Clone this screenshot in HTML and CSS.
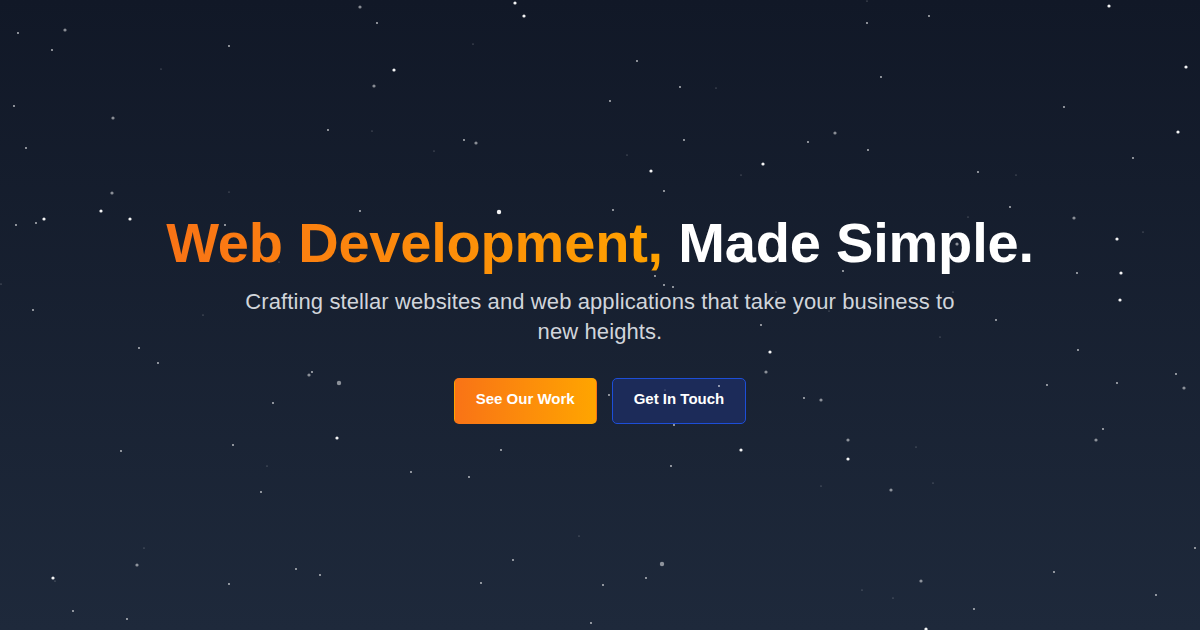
FILE: index.html
```html
<!DOCTYPE html>
<html lang="en">
<head>
<meta charset="utf-8">
<title>Web Development, Made Simple.</title>
<link rel="stylesheet" href="styles.css">
</head>
<body>
<main class="hero">
  <div class="hero-content">
    <h1 class="title"><span class="title-accent">Web Development,</span> Made Simple.</h1>
    <p class="subtitle">Crafting stellar websites and web applications that take your business to new heights.</p>
    <div class="actions">
      <a class="btn btn-primary" href="#work">See Our Work</a>
      <a class="btn btn-secondary" href="#contact">Get In Touch</a>
    </div>
  </div>
  <svg class="stars" viewBox="0 0 1200 630" width="1200" height="630" aria-hidden="true">
    <g class="s">
      <circle cx="18" cy="33" r="0.9"/><circle cx="52" cy="50" r="0.9"/><circle cx="229" cy="46" r="0.9"/>
      <circle cx="377" cy="23" r="0.9"/><circle cx="14" cy="106" r="0.9"/><circle cx="26" cy="148" r="0.9"/>
      <circle cx="328" cy="130" r="0.9"/><circle cx="464" cy="140" r="0.9"/><circle cx="36" cy="223" r="0.9"/>
      <circle cx="16" cy="225" r="0.9"/><circle cx="360" cy="211" r="0.9"/><circle cx="225" cy="225" r="0.9"/>
      <circle cx="33" cy="310" r="0.9"/><circle cx="867" cy="23" r="0.9"/><circle cx="929" cy="16" r="0.9"/>
      <circle cx="637" cy="61" r="0.9"/><circle cx="680" cy="87" r="0.9"/><circle cx="881" cy="77" r="0.9"/>
      <circle cx="610" cy="101" r="0.9"/><circle cx="1064" cy="107" r="0.9"/><circle cx="684" cy="140" r="0.9"/>
      <circle cx="808" cy="142" r="0.9"/><circle cx="868" cy="150" r="0.9"/><circle cx="1133" cy="158" r="0.9"/>
      <circle cx="978" cy="172" r="0.9"/><circle cx="664" cy="191" r="0.9"/><circle cx="613" cy="210" r="0.9"/>
      <circle cx="1010" cy="207" r="0.9"/><circle cx="843" cy="271" r="0.9"/><circle cx="1077" cy="273" r="0.9"/>
      <circle cx="655" cy="276" r="0.9"/><circle cx="664" cy="285" r="0.9"/><circle cx="673" cy="287" r="0.9"/>
      <circle cx="139" cy="348" r="0.9"/><circle cx="158" cy="363" r="0.9"/><circle cx="312" cy="372" r="0.9"/>
      <circle cx="273" cy="403" r="0.9"/><circle cx="233" cy="445" r="0.9"/><circle cx="121" cy="451" r="0.9"/>
      <circle cx="261" cy="492" r="0.9"/><circle cx="411" cy="472" r="0.9"/><circle cx="469" cy="477" r="0.9"/>
      <circle cx="501" cy="450" r="0.9"/><circle cx="513" cy="560" r="0.9"/><circle cx="481" cy="583" r="0.9"/>
      <circle cx="296" cy="569" r="0.9"/><circle cx="320" cy="575" r="0.9"/><circle cx="229" cy="584" r="0.9"/>
      <circle cx="73" cy="611" r="0.9"/><circle cx="127" cy="619" r="0.9"/><circle cx="591" cy="623" r="0.9"/>
      <circle cx="761" cy="325" r="0.9"/><circle cx="996" cy="320" r="0.9"/><circle cx="1078" cy="350" r="0.9"/>
      <circle cx="1176" cy="374" r="0.9"/><circle cx="1047" cy="385" r="0.9"/><circle cx="1117" cy="383" r="0.9"/>
      <circle cx="719" cy="386" r="0.9"/><circle cx="609" cy="395" r="0.9"/><circle cx="804" cy="398" r="0.9"/>
      <circle cx="674" cy="425" r="0.9"/><circle cx="1103" cy="429" r="0.9"/><circle cx="671" cy="466" r="0.9"/>
      <circle cx="1195" cy="548" r="0.9"/><circle cx="646" cy="578" r="0.9"/><circle cx="603" cy="585" r="0.9"/>
      <circle cx="1054" cy="572" r="0.9"/><circle cx="1156" cy="595" r="0.9"/><circle cx="974" cy="609" r="0.9"/>
    </g>
    <g class="t">
      <circle cx="161" cy="69" r="0.6"/><circle cx="473" cy="44" r="0.6"/><circle cx="372" cy="131" r="0.6"/>
      <circle cx="434" cy="151" r="0.6"/><circle cx="229" cy="192" r="0.6"/><circle cx="279" cy="262" r="0.6"/>
      <circle cx="1" cy="284" r="0.6"/><circle cx="203" cy="315" r="0.6"/><circle cx="867" cy="1" r="0.6"/>
      <circle cx="716" cy="88" r="0.6"/><circle cx="627" cy="155" r="0.6"/><circle cx="741" cy="175" r="0.6"/>
      <circle cx="1016" cy="175" r="0.6"/><circle cx="968" cy="217" r="0.6"/><circle cx="1143" cy="232" r="0.6"/>
      <circle cx="776" cy="292" r="0.6"/><circle cx="953" cy="292" r="0.6"/><circle cx="829" cy="311" r="0.6"/>
      <circle cx="267" cy="466" r="0.6"/><circle cx="579" cy="536" r="0.6"/><circle cx="144" cy="548" r="0.6"/>
      <circle cx="55" cy="581" r="0.6"/><circle cx="940" cy="337" r="0.6"/><circle cx="665" cy="390" r="0.6"/>
      <circle cx="916" cy="447" r="0.6"/><circle cx="821" cy="486" r="0.6"/><circle cx="933" cy="483" r="0.6"/>
      <circle cx="862" cy="590" r="0.6"/><circle cx="893" cy="598" r="0.6"/>
    </g>
    <g class="g">
      <circle cx="65" cy="30" r="1.6"/><circle cx="360" cy="7" r="1.6"/><circle cx="374" cy="86" r="1.6"/>
      <circle cx="113" cy="118" r="1.6"/><circle cx="476" cy="143" r="1.6"/><circle cx="112" cy="193" r="1.6"/>
      <circle cx="835" cy="133" r="1.6"/><circle cx="1074" cy="218" r="1.6"/><circle cx="957" cy="244" r="1.6"/>
      <circle cx="309" cy="375" r="1.6"/><circle cx="339" cy="383" r="2.2"/><circle cx="137" cy="565" r="1.6"/>
      <circle cx="766" cy="372" r="1.6"/><circle cx="1184" cy="388" r="1.6"/><circle cx="821" cy="400" r="1.6"/>
      <circle cx="1096" cy="440" r="1.6"/><circle cx="848" cy="440" r="1.6"/><circle cx="891" cy="490" r="1.6"/>
      <circle cx="662" cy="564" r="2.2"/><circle cx="921" cy="581" r="1.6"/>
    </g>
    <g class="w">
      <circle cx="515" cy="3" r="1.6"/><circle cx="524" cy="16" r="1.6"/><circle cx="394" cy="70" r="1.6"/>
      <circle cx="101" cy="211" r="1.6"/><circle cx="130" cy="219" r="1.6"/><circle cx="44" cy="219" r="1.6"/>
      <circle cx="499" cy="212" r="2.2"/><circle cx="1109" cy="6" r="1.6"/><circle cx="1186" cy="67" r="1.6"/>
      <circle cx="1178" cy="132" r="1.6"/><circle cx="763" cy="164" r="1.6"/><circle cx="651" cy="171" r="1.6"/>
      <circle cx="1117" cy="239" r="1.6"/><circle cx="1121" cy="273" r="1.6"/><circle cx="1120" cy="300" r="1.6"/>
      <circle cx="337" cy="438" r="1.6"/><circle cx="53" cy="578" r="1.6"/><circle cx="770" cy="352" r="1.6"/>
      <circle cx="741" cy="450" r="1.6"/><circle cx="848" cy="459" r="1.6"/><circle cx="926" cy="629" r="1.6"/>
    </g>
  </svg>
</main>
</body>
</html>
```

FILE: styles.css
```css
* {
  box-sizing: border-box;
}

html, body {
  margin: 0;
  padding: 0;
}

body {
  font-family: "Liberation Sans", Arial, Helvetica, sans-serif;
  background: #111827;
  color: #ffffff;
}

.hero {
  position: relative;
  width: 1200px;
  height: 630px;
  overflow: hidden;
  display: flex;
  align-items: center;
  justify-content: center;
  padding-top: 5px;
  background: linear-gradient(180deg, #111827 0%, #1e293b 100%);
}

.hero-content {
  display: flex;
  flex-direction: column;
  align-items: center;
  text-align: center;
}

.title {
  margin: 0 0 12px;
  font-size: 56px;
  line-height: 64px;
  font-weight: 700;
  letter-spacing: -0.2px;
  color: #ffffff;
  white-space: nowrap;
}

.title-accent {
  background: linear-gradient(90deg, #f97316 0%, #ffa200 100%);
  -webkit-background-clip: text;
  background-clip: text;
  color: transparent;
}

.subtitle {
  margin: 0 0 31px;
  max-width: 750px;
  font-size: 22px;
  line-height: 30px;
  letter-spacing: 0.1px;
  color: #d1d5db;
}

.actions {
  display: flex;
  gap: 15px;
}

.btn {
  display: inline-block;
  padding: 9px 21px 13px;
  border: 1px solid transparent;
  border-radius: 5px;
  font-size: 15px;
  line-height: 22px;
  font-weight: 700;
  color: #ffffff;
  text-decoration: none;
}

.btn-primary {
  background: linear-gradient(90deg, #f97316 0%, #ffa500 100%);
}

.btn-secondary {
  background: #1c2b59;
  border-color: #1d4ed8;
}

.stars {
  position: absolute;
  top: 0;
  left: 0;
  pointer-events: none;
}

.stars .t {
  fill: rgba(255, 255, 255, 0.45);
}

.stars .s {
  fill: rgba(255, 255, 255, 0.75);
}

.stars .g {
  fill: rgba(255, 255, 255, 0.5);
}

.stars .w {
  fill: rgba(255, 255, 255, 0.95);
}
```
